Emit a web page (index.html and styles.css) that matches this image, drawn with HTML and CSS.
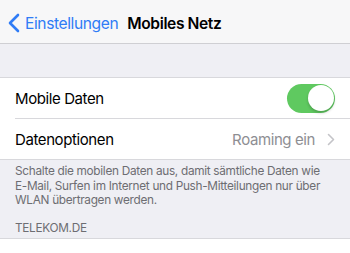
FILE: index.html
```html
<!DOCTYPE html>
<html lang="de">

<head>
    <meta charset="UTF-8">
    <meta name="viewport" content="width=device-width, initial-scale=1.0">
    <title>Mobiles Netz</title>
    <link rel="stylesheet" href="styles.css">
</head>

<body>
    <div class="navbar">
        <a class="back">
            <svg class="back-icon" width="12" height="20" viewBox="0 0 12 20">
                <path d="M10 2 L2 10 L10 18" fill="none" stroke="currentColor" stroke-width="2.6" stroke-linecap="round" stroke-linejoin="round"/>
            </svg>
            <span>Einstellungen</span>
        </a>
        <p class="title">Mobiles Netz</p>
    </div>
    <div class="spacer"></div>
    <div class="group">
        <div class="cell">
            <span class="label">Mobile Daten</span>
            <div class="switch on">
                <div class="knob"></div>
            </div>
        </div>
        <div class="cell">
            <span class="label">Datenoptionen</span>
            <span class="value">Roaming ein</span>
            <svg class="chevron" width="8" height="13" viewBox="0 0 8 13">
                <path d="M1.5 1.5 L6.5 6.5 L1.5 11.5" fill="none" stroke="currentColor" stroke-width="1.6" stroke-linecap="round" stroke-linejoin="round"/>
            </svg>
        </div>
    </div>
    <p class="footer">Schalte die mobilen Daten aus, damit sämtliche Daten wie<br>E-Mail, Surfen im Internet und Push-Mitteilungen nur über<br>WLAN übertragen werden.</p>
    <p class="section-header">TELEKOM.DE</p>
    <div class="group last">
        <div class="cell"></div>
    </div>
</body>

</html>
```

FILE: styles.css
```css
html,
body {
    margin: 0;
    font-family: Inter, "Liberation Sans", sans-serif;
    background-color: var(--group-background);
    color: var(--text-color);
    overflow: hidden;
}

:root {
    --text-color: #000;
    --group-background: #efeff4;
    --nav-background: #f7f7f8;
    --accent-color: #2f7cf6;
    --secondary-text: #8e8e93;
    --footer-text: #6d6d72;
    --separator: #d8d8dc;
    --green: #5fc960;
}

.navbar {
    box-sizing: border-box;
    height: 44px;
    padding-top: 3px;
    display: flex;
    align-items: center;
    background-color: var(--nav-background);
    border-bottom: 1px solid #cfcfd3;
    letter-spacing: -0.4px;
}

.navbar .back {
    display: flex;
    align-items: center;
    color: var(--accent-color);
    font-size: 15.6px;
    margin-left: 8px;
}

.navbar .back-icon {
    margin-right: 5px;
}

.navbar .title {
    font-size: 15.6px;
    font-weight: 600;
    margin: 0 0 0 9px;
}

.spacer {
    height: 33px;
}

.group {
    background-color: #fff;
    border-top: 1px solid var(--separator);
    border-bottom: 1px solid var(--separator);
}

.group .cell {
    height: 40px;
    display: flex;
    align-items: center;
    margin-left: 15px;
    padding-right: 15px;
    font-size: 15px;
    letter-spacing: -0.4px;
}

.group .cell + .cell {
    border-top: 1px solid var(--separator);
}

.group .cell .label {
    flex: 1;
}

.group .cell .value {
    color: var(--secondary-text);
    margin-right: 12px;
}

.group .cell .chevron {
    color: #c4c4c8;
}

.switch {
    width: 48px;
    height: 29px;
    border-radius: 15px;
    background-color: var(--green);
    position: relative;
}

.switch .knob {
    position: absolute;
    top: 1.5px;
    right: 1.5px;
    width: 26px;
    height: 26px;
    border-radius: 50%;
    background-color: #fff;
    box-shadow: 0 2px 3px rgba(0, 0, 0, 0.2);
}

.footer,
.section-header {
    margin: 0;
    font-size: 11.8px;
    line-height: 14.5px;
    letter-spacing: -0.3px;
    color: var(--footer-text);
}

.footer {
    padding: 4px 5px 0 15px;
    white-space: nowrap;
}

.section-header {
    padding: 13px 15px 3px;
}

.group.last {
    border-bottom: none;
}
```
